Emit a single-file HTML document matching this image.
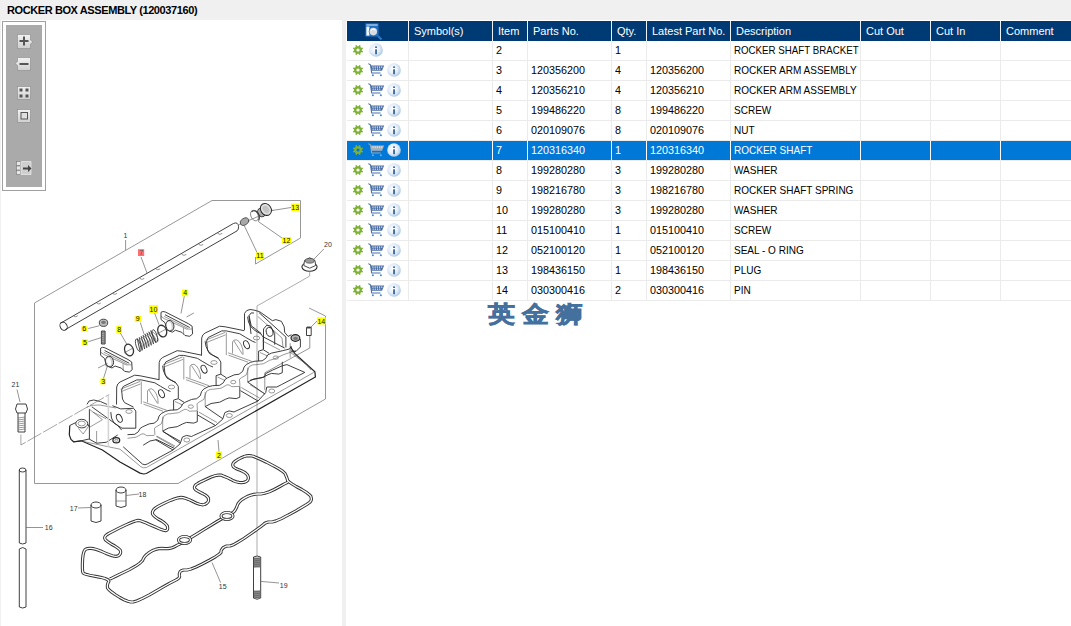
<!DOCTYPE html><html><head><meta charset="utf-8"><style>
*{margin:0;padding:0;box-sizing:border-box}
html,body{width:1071px;height:626px;overflow:hidden;background:#fff;font-family:"Liberation Sans",sans-serif;position:relative}
.a{position:absolute}
.hd{position:absolute;left:0;top:0;width:1071px;height:20px;background:#f0f0f0}
.title{position:absolute;left:7px;top:4px;font-size:11px;line-height:13px;font-weight:bold;color:#000;white-space:nowrap;letter-spacing:-0.4px}
.t{position:absolute;font-size:11px;color:#000;white-space:nowrap;line-height:13px;overflow:hidden}.t span{display:inline-block;transform-origin:0 0}
.h{position:absolute;font-size:11px;color:#fff;white-space:nowrap;line-height:13px}
.ic{position:absolute;overflow:visible}
</style></head><body>
<svg width="0" height="0" style="position:absolute">
<defs>
<radialGradient id="ig" cx="0.42" cy="0.42" r="0.62"><stop offset="0" stop-color="#ffffff"/><stop offset="0.55" stop-color="#e4eef8"/><stop offset="0.85" stop-color="#bcd4ec"/><stop offset="1" stop-color="#a4c2e2"/></radialGradient><radialGradient id="igs" cx="0.42" cy="0.42" r="0.62"><stop offset="0" stop-color="#ffffff"/><stop offset="0.7" stop-color="#eef3f8"/><stop offset="1" stop-color="#c8d8ea"/></radialGradient>
<g id="gear"><path fill="#7db235" fill-rule="evenodd" d="M9.85 6.61 L11.03 7.33 L10.50 8.61 L9.16 8.29 L8.29 9.16 L8.61 10.50 L7.33 11.03 L6.61 9.85 L5.39 9.85 L4.67 11.03 L3.39 10.50 L3.71 9.16 L2.84 8.29 L1.50 8.61 L0.97 7.33 L2.15 6.61 L2.15 5.39 L0.97 4.67 L1.50 3.39 L2.84 3.71 L3.71 2.84 L3.39 1.50 L4.67 0.97 L5.39 2.15 L6.61 2.15 L7.33 0.97 L8.61 1.50 L8.29 2.84 L9.16 3.71 L10.50 3.39 L11.03 4.67 L9.85 5.39Z M7.6 6 A1.6 1.6 0 1 0 4.4 6 A1.6 1.6 0 1 0 7.6 6Z"/></g>
<g id="info"><circle cx="7" cy="7" r="6.8" fill="url(#ig)"/><rect x="6.15" y="3.4" width="1.8" height="1.6" fill="#3a64a0"/><rect x="6.15" y="6.3" width="1.8" height="4.9" fill="#3a64a0"/></g>
<g id="cart"><path d="M0.3 0.6l2.2 1.3 1.2 8.1h8.8" fill="none" stroke="#4d70a6" stroke-width="1.1"/><path d="M2.6 2.4h13.6l-2.2 5.3h-10.6z" fill="#4d70a6"/><g fill="#fff" opacity="0.85"><rect x="4.4" y="3.4" width="1.1" height="1.4"/><rect x="6.6" y="3.4" width="1.1" height="1.4"/><rect x="8.8" y="3.4" width="1.1" height="1.4"/><rect x="11" y="3.4" width="1.1" height="1.4"/><rect x="13.2" y="3.4" width="1.1" height="1.4"/><rect x="4.6" y="5.6" width="1.1" height="1.2"/><rect x="6.8" y="5.6" width="1.1" height="1.2"/><rect x="9" y="5.6" width="1.1" height="1.2"/><rect x="11.2" y="5.6" width="1.1" height="1.2"/></g><circle cx="4.9" cy="12.2" r="1" fill="#3d8ad6"/><circle cx="12.9" cy="12.2" r="1" fill="#3d8ad6"/></g>
<g id="cartsel"><path d="M0.3 0.6l2.2 1.3 1.2 8.1h8.8" fill="none" stroke="#9aa6b4" stroke-width="1.1"/><path d="M2.6 2.4h13.6l-2.2 5.3h-10.6z" fill="#a8b0ba"/><g fill="#e6ecf2"><rect x="4.4" y="3.4" width="1.1" height="1.4"/><rect x="6.6" y="3.4" width="1.1" height="1.4"/><rect x="8.8" y="3.4" width="1.1" height="1.4"/><rect x="11" y="3.4" width="1.1" height="1.4"/><rect x="13.2" y="3.4" width="1.1" height="1.4"/></g><circle cx="4.9" cy="12.2" r="1" fill="#6fb0e8"/><circle cx="12.9" cy="12.2" r="1" fill="#6fb0e8"/></g>
</defs></svg>
<div class="hd"></div>
<div class="title">ROCKER BOX ASSEMBLY (120037160)</div>
<div class="a" style="left:0;top:20px;width:1px;height:606px;background:#f0f0f0"></div>
<div class="a" style="left:342px;top:20px;width:4px;height:606px;background:#f0f0f0"></div>

<div class="a" style="left:2px;top:21px;width:44px;height:170px;border:1px solid #a0a0a0;background:#fff"></div>
<div class="a" style="left:6px;top:25px;width:36px;height:162px;background:#aaaaaa"></div>
<svg class="a" style="left:0;top:0" width="50" height="200" viewBox="0 0 50 200">
<defs><linearGradient id="bg" x1="0" y1="0" x2="0" y2="1"><stop offset="0" stop-color="#f2f2f2"/><stop offset="1" stop-color="#cfcfcf"/></linearGradient></defs>
<g stroke="#8a8a8a" stroke-width="0.6" fill="url(#bg)">
<path d="M17.5 34.5h13v5.5l2.5 2-2.5 2v4.5h-13z"/>
<path d="M17.5 57.5h13v13h-13v-5l-2.5-2 2.5-2z"/>
<rect x="17.5" y="86.5" width="13" height="13"/>
<rect x="17.5" y="109.5" width="13" height="13"/>
</g>
<g fill="#555"><rect x="19.5" y="40" width="9" height="2"/><rect x="23" y="36.5" width="2" height="9"/>
<rect x="19.5" y="63" width="9" height="2"/>
<rect x="19.5" y="88.5" width="3" height="3"/><rect x="25.5" y="88.5" width="3" height="3"/><rect x="19.5" y="94.5" width="3" height="3"/><rect x="25.5" y="94.5" width="3" height="3"/>
</g>
<rect x="21" y="112.5" width="6.5" height="6.5" fill="#e0e0e0" stroke="#555" stroke-width="1"/>
<g stroke="#777" stroke-width="0.6" fill="#e6e6e6"><rect x="16.5" y="161.5" width="4" height="4"/><rect x="16.5" y="166" width="4" height="4"/><rect x="16.5" y="170.5" width="4" height="4"/></g>
<path d="M21 161.5h10v13h-10z" fill="#cfcfcf" stroke="#e8e8e8" stroke-width="0.8"/>
<path d="M23 167.5h5v-2.5l3.5 3.5-3.5 3.5v-2.5h-5z" fill="#444"/>
</svg>

<div class="a" style="left:347px;top:21px;width:724px;height:20px;background:#003a75"></div>
<div class="a" style="left:408px;top:21px;width:1px;height:20px;background:#eef2f6"></div>
<div class="a" style="left:492px;top:21px;width:1px;height:20px;background:#eef2f6"></div>
<div class="a" style="left:527px;top:21px;width:1px;height:20px;background:#eef2f6"></div>
<div class="a" style="left:611px;top:21px;width:1px;height:20px;background:#eef2f6"></div>
<div class="a" style="left:646px;top:21px;width:1px;height:20px;background:#eef2f6"></div>
<div class="a" style="left:730px;top:21px;width:1px;height:20px;background:#eef2f6"></div>
<div class="a" style="left:860px;top:21px;width:1px;height:20px;background:#eef2f6"></div>
<div class="a" style="left:930px;top:21px;width:1px;height:20px;background:#eef2f6"></div>
<div class="a" style="left:1000px;top:21px;width:1px;height:20px;background:#eef2f6"></div>
<svg class="a" style="left:364px;top:22px" width="19" height="19" viewBox="0 0 19 19"><rect x="1.3" y="1.3" width="13.3" height="13.3" fill="#1f6fc2"/><rect x="2.4" y="2.5" width="11.2" height="1" fill="#e8f0f8"/><rect x="2.4" y="4.6" width="3" height="9" fill="#ffffff"/><path d="M14.2 14.2l3.3 3.3" stroke="#2a7ad0" stroke-width="2"/><circle cx="9.3" cy="9.6" r="4.6" fill="#1f6fc2"/><circle cx="9.3" cy="9.6" r="3.8" fill="#d9dde2"/><path d="M6.8 8.2q2.5-2 5 0" stroke="#fff" stroke-width="1" fill="none"/></svg>
<div class="h" style="left:414px;top:25px">Symbol(s)</div>
<div class="h" style="left:498px;top:25px">Item</div>
<div class="h" style="left:533px;top:25px">Parts No.</div>
<div class="h" style="left:617px;top:25px">Qty.</div>
<div class="h" style="left:652px;top:25px">Latest Part No.</div>
<div class="h" style="left:736px;top:25px">Description</div>
<div class="h" style="left:866px;top:25px">Cut Out</div>
<div class="h" style="left:936px;top:25px">Cut In</div>
<div class="h" style="left:1006px;top:25px">Comment</div>
<div class="a" style="left:347px;top:60px;width:724px;height:1px;background:#ebebeb"></div>
<div class="t" style="left:496px;top:44px;color:#000;width:32px"><span style="transform:scaleX(0.98)">2</span></div>
<div class="t" style="left:615px;top:44px;color:#000;width:32px"><span style="transform:scaleX(0.98)">1</span></div>
<div class="t" style="left:734px;top:44px;color:#000;width:127px"><span style="transform:scaleX(0.884)">ROCKER SHAFT BRACKET</span></div>
<svg class="ic" style="left:352.1px;top:44px" width="12" height="12"><use href="#gear"/></svg>
<svg class="ic" style="left:369px;top:42.8px" width="14" height="14"><use href="#info"/></svg>
<div class="a" style="left:347px;top:80px;width:724px;height:1px;background:#ebebeb"></div>
<div class="t" style="left:496px;top:64px;color:#000;width:32px"><span style="transform:scaleX(0.98)">3</span></div>
<div class="t" style="left:531px;top:64px;color:#000;width:81px"><span style="transform:scaleX(0.98)">120356200</span></div>
<div class="t" style="left:615px;top:64px;color:#000;width:32px"><span style="transform:scaleX(0.98)">4</span></div>
<div class="t" style="left:650px;top:64px;color:#000;width:81px"><span style="transform:scaleX(0.98)">120356200</span></div>
<div class="t" style="left:734px;top:64px;color:#000;width:127px"><span style="transform:scaleX(0.91)">ROCKER ARM ASSEMBLY</span></div>
<svg class="ic" style="left:352.1px;top:64px" width="12" height="12"><use href="#gear"/></svg>
<svg class="ic" style="left:367.6px;top:63.2px" width="17" height="14"><use href="#cart"/></svg>
<svg class="ic" style="left:386.9px;top:62.8px" width="14" height="14"><use href="#info"/></svg>
<div class="a" style="left:347px;top:100px;width:724px;height:1px;background:#ebebeb"></div>
<div class="t" style="left:496px;top:84px;color:#000;width:32px"><span style="transform:scaleX(0.98)">4</span></div>
<div class="t" style="left:531px;top:84px;color:#000;width:81px"><span style="transform:scaleX(0.98)">120356210</span></div>
<div class="t" style="left:615px;top:84px;color:#000;width:32px"><span style="transform:scaleX(0.98)">4</span></div>
<div class="t" style="left:650px;top:84px;color:#000;width:81px"><span style="transform:scaleX(0.98)">120356210</span></div>
<div class="t" style="left:734px;top:84px;color:#000;width:127px"><span style="transform:scaleX(0.91)">ROCKER ARM ASSEMBLY</span></div>
<svg class="ic" style="left:352.1px;top:84px" width="12" height="12"><use href="#gear"/></svg>
<svg class="ic" style="left:367.6px;top:83.2px" width="17" height="14"><use href="#cart"/></svg>
<svg class="ic" style="left:386.9px;top:82.8px" width="14" height="14"><use href="#info"/></svg>
<div class="a" style="left:347px;top:120px;width:724px;height:1px;background:#ebebeb"></div>
<div class="t" style="left:496px;top:104px;color:#000;width:32px"><span style="transform:scaleX(0.98)">5</span></div>
<div class="t" style="left:531px;top:104px;color:#000;width:81px"><span style="transform:scaleX(0.98)">199486220</span></div>
<div class="t" style="left:615px;top:104px;color:#000;width:32px"><span style="transform:scaleX(0.98)">8</span></div>
<div class="t" style="left:650px;top:104px;color:#000;width:81px"><span style="transform:scaleX(0.98)">199486220</span></div>
<div class="t" style="left:734px;top:104px;color:#000;width:127px"><span style="transform:scaleX(0.91)">SCREW</span></div>
<svg class="ic" style="left:352.1px;top:104px" width="12" height="12"><use href="#gear"/></svg>
<svg class="ic" style="left:367.6px;top:103.2px" width="17" height="14"><use href="#cart"/></svg>
<svg class="ic" style="left:386.9px;top:102.8px" width="14" height="14"><use href="#info"/></svg>
<div class="a" style="left:347px;top:140px;width:724px;height:1px;background:#ebebeb"></div>
<div class="t" style="left:496px;top:124px;color:#000;width:32px"><span style="transform:scaleX(0.98)">6</span></div>
<div class="t" style="left:531px;top:124px;color:#000;width:81px"><span style="transform:scaleX(0.98)">020109076</span></div>
<div class="t" style="left:615px;top:124px;color:#000;width:32px"><span style="transform:scaleX(0.98)">8</span></div>
<div class="t" style="left:650px;top:124px;color:#000;width:81px"><span style="transform:scaleX(0.98)">020109076</span></div>
<div class="t" style="left:734px;top:124px;color:#000;width:127px"><span style="transform:scaleX(0.91)">NUT</span></div>
<svg class="ic" style="left:352.1px;top:124px" width="12" height="12"><use href="#gear"/></svg>
<svg class="ic" style="left:367.6px;top:123.2px" width="17" height="14"><use href="#cart"/></svg>
<svg class="ic" style="left:386.9px;top:122.8px" width="14" height="14"><use href="#info"/></svg>
<div class="a" style="left:347px;top:141px;width:724px;height:19px;background:#0078d7"></div>
<div class="a" style="left:347px;top:160px;width:724px;height:1px;background:#ebebeb"></div>
<div class="t" style="left:496px;top:144px;color:#fff;width:32px"><span style="transform:scaleX(0.98)">7</span></div>
<div class="t" style="left:531px;top:144px;color:#fff;width:81px"><span style="transform:scaleX(0.98)">120316340</span></div>
<div class="t" style="left:615px;top:144px;color:#fff;width:32px"><span style="transform:scaleX(0.98)">1</span></div>
<div class="t" style="left:650px;top:144px;color:#fff;width:81px"><span style="transform:scaleX(0.98)">120316340</span></div>
<div class="t" style="left:734px;top:144px;color:#fff;width:127px"><span style="transform:scaleX(0.91)">ROCKER SHAFT</span></div>
<svg class="ic" style="left:352.1px;top:144px" width="12" height="12"><use href="#gear"/></svg>
<svg class="ic" style="left:367.6px;top:143.2px" width="17" height="14"><use href="#cartsel"/></svg>
<svg class="ic" style="left:386.9px;top:142.8px" width="14" height="14"><use href="#info"/></svg>
<div class="a" style="left:347px;top:180px;width:724px;height:1px;background:#ebebeb"></div>
<div class="t" style="left:496px;top:164px;color:#000;width:32px"><span style="transform:scaleX(0.98)">8</span></div>
<div class="t" style="left:531px;top:164px;color:#000;width:81px"><span style="transform:scaleX(0.98)">199280280</span></div>
<div class="t" style="left:615px;top:164px;color:#000;width:32px"><span style="transform:scaleX(0.98)">3</span></div>
<div class="t" style="left:650px;top:164px;color:#000;width:81px"><span style="transform:scaleX(0.98)">199280280</span></div>
<div class="t" style="left:734px;top:164px;color:#000;width:127px"><span style="transform:scaleX(0.91)">WASHER</span></div>
<svg class="ic" style="left:352.1px;top:164px" width="12" height="12"><use href="#gear"/></svg>
<svg class="ic" style="left:367.6px;top:163.2px" width="17" height="14"><use href="#cart"/></svg>
<svg class="ic" style="left:386.9px;top:162.8px" width="14" height="14"><use href="#info"/></svg>
<div class="a" style="left:347px;top:200px;width:724px;height:1px;background:#ebebeb"></div>
<div class="t" style="left:496px;top:184px;color:#000;width:32px"><span style="transform:scaleX(0.98)">9</span></div>
<div class="t" style="left:531px;top:184px;color:#000;width:81px"><span style="transform:scaleX(0.98)">198216780</span></div>
<div class="t" style="left:615px;top:184px;color:#000;width:32px"><span style="transform:scaleX(0.98)">3</span></div>
<div class="t" style="left:650px;top:184px;color:#000;width:81px"><span style="transform:scaleX(0.98)">198216780</span></div>
<div class="t" style="left:734px;top:184px;color:#000;width:127px"><span style="transform:scaleX(0.91)">ROCKER SHAFT SPRING</span></div>
<svg class="ic" style="left:352.1px;top:184px" width="12" height="12"><use href="#gear"/></svg>
<svg class="ic" style="left:367.6px;top:183.2px" width="17" height="14"><use href="#cart"/></svg>
<svg class="ic" style="left:386.9px;top:182.8px" width="14" height="14"><use href="#info"/></svg>
<div class="a" style="left:347px;top:220px;width:724px;height:1px;background:#ebebeb"></div>
<div class="t" style="left:496px;top:204px;color:#000;width:32px"><span style="transform:scaleX(0.98)">10</span></div>
<div class="t" style="left:531px;top:204px;color:#000;width:81px"><span style="transform:scaleX(0.98)">199280280</span></div>
<div class="t" style="left:615px;top:204px;color:#000;width:32px"><span style="transform:scaleX(0.98)">3</span></div>
<div class="t" style="left:650px;top:204px;color:#000;width:81px"><span style="transform:scaleX(0.98)">199280280</span></div>
<div class="t" style="left:734px;top:204px;color:#000;width:127px"><span style="transform:scaleX(0.91)">WASHER</span></div>
<svg class="ic" style="left:352.1px;top:204px" width="12" height="12"><use href="#gear"/></svg>
<svg class="ic" style="left:367.6px;top:203.2px" width="17" height="14"><use href="#cart"/></svg>
<svg class="ic" style="left:386.9px;top:202.8px" width="14" height="14"><use href="#info"/></svg>
<div class="a" style="left:347px;top:240px;width:724px;height:1px;background:#ebebeb"></div>
<div class="t" style="left:496px;top:224px;color:#000;width:32px"><span style="transform:scaleX(0.98)">11</span></div>
<div class="t" style="left:531px;top:224px;color:#000;width:81px"><span style="transform:scaleX(0.98)">015100410</span></div>
<div class="t" style="left:615px;top:224px;color:#000;width:32px"><span style="transform:scaleX(0.98)">1</span></div>
<div class="t" style="left:650px;top:224px;color:#000;width:81px"><span style="transform:scaleX(0.98)">015100410</span></div>
<div class="t" style="left:734px;top:224px;color:#000;width:127px"><span style="transform:scaleX(0.91)">SCREW</span></div>
<svg class="ic" style="left:352.1px;top:224px" width="12" height="12"><use href="#gear"/></svg>
<svg class="ic" style="left:367.6px;top:223.2px" width="17" height="14"><use href="#cart"/></svg>
<svg class="ic" style="left:386.9px;top:222.8px" width="14" height="14"><use href="#info"/></svg>
<div class="a" style="left:347px;top:260px;width:724px;height:1px;background:#ebebeb"></div>
<div class="t" style="left:496px;top:244px;color:#000;width:32px"><span style="transform:scaleX(0.98)">12</span></div>
<div class="t" style="left:531px;top:244px;color:#000;width:81px"><span style="transform:scaleX(0.98)">052100120</span></div>
<div class="t" style="left:615px;top:244px;color:#000;width:32px"><span style="transform:scaleX(0.98)">1</span></div>
<div class="t" style="left:650px;top:244px;color:#000;width:81px"><span style="transform:scaleX(0.98)">052100120</span></div>
<div class="t" style="left:734px;top:244px;color:#000;width:127px"><span style="transform:scaleX(0.91)">SEAL - O RING</span></div>
<svg class="ic" style="left:352.1px;top:244px" width="12" height="12"><use href="#gear"/></svg>
<svg class="ic" style="left:367.6px;top:243.2px" width="17" height="14"><use href="#cart"/></svg>
<svg class="ic" style="left:386.9px;top:242.8px" width="14" height="14"><use href="#info"/></svg>
<div class="a" style="left:347px;top:280px;width:724px;height:1px;background:#ebebeb"></div>
<div class="t" style="left:496px;top:264px;color:#000;width:32px"><span style="transform:scaleX(0.98)">13</span></div>
<div class="t" style="left:531px;top:264px;color:#000;width:81px"><span style="transform:scaleX(0.98)">198436150</span></div>
<div class="t" style="left:615px;top:264px;color:#000;width:32px"><span style="transform:scaleX(0.98)">1</span></div>
<div class="t" style="left:650px;top:264px;color:#000;width:81px"><span style="transform:scaleX(0.98)">198436150</span></div>
<div class="t" style="left:734px;top:264px;color:#000;width:127px"><span style="transform:scaleX(0.91)">PLUG</span></div>
<svg class="ic" style="left:352.1px;top:264px" width="12" height="12"><use href="#gear"/></svg>
<svg class="ic" style="left:367.6px;top:263.2px" width="17" height="14"><use href="#cart"/></svg>
<svg class="ic" style="left:386.9px;top:262.8px" width="14" height="14"><use href="#info"/></svg>
<div class="a" style="left:347px;top:300px;width:724px;height:1px;background:#ebebeb"></div>
<div class="t" style="left:496px;top:284px;color:#000;width:32px"><span style="transform:scaleX(0.98)">14</span></div>
<div class="t" style="left:531px;top:284px;color:#000;width:81px"><span style="transform:scaleX(0.98)">030300416</span></div>
<div class="t" style="left:615px;top:284px;color:#000;width:32px"><span style="transform:scaleX(0.98)">2</span></div>
<div class="t" style="left:650px;top:284px;color:#000;width:81px"><span style="transform:scaleX(0.98)">030300416</span></div>
<div class="t" style="left:734px;top:284px;color:#000;width:127px"><span style="transform:scaleX(0.91)">PIN</span></div>
<svg class="ic" style="left:352.1px;top:284px" width="12" height="12"><use href="#gear"/></svg>
<svg class="ic" style="left:367.6px;top:283.2px" width="17" height="14"><use href="#cart"/></svg>
<svg class="ic" style="left:386.9px;top:282.8px" width="14" height="14"><use href="#info"/></svg>
<div class="a" style="left:408px;top:41px;width:1px;height:260px;background:#ebebeb"></div>
<div class="a" style="left:492px;top:41px;width:1px;height:260px;background:#ebebeb"></div>
<div class="a" style="left:527px;top:41px;width:1px;height:260px;background:#ebebeb"></div>
<div class="a" style="left:611px;top:41px;width:1px;height:260px;background:#ebebeb"></div>
<div class="a" style="left:646px;top:41px;width:1px;height:260px;background:#ebebeb"></div>
<div class="a" style="left:730px;top:41px;width:1px;height:260px;background:#ebebeb"></div>
<div class="a" style="left:860px;top:41px;width:1px;height:260px;background:#ebebeb"></div>
<div class="a" style="left:930px;top:41px;width:1px;height:260px;background:#ebebeb"></div>
<div class="a" style="left:1000px;top:41px;width:1px;height:260px;background:#ebebeb"></div>
<div class="a" style="left:408px;top:141px;width:1px;height:19px;background:#fff"></div>
<div class="a" style="left:492px;top:141px;width:1px;height:19px;background:#fff"></div>
<div class="a" style="left:527px;top:141px;width:1px;height:19px;background:#fff"></div>
<div class="a" style="left:611px;top:141px;width:1px;height:19px;background:#fff"></div>
<div class="a" style="left:646px;top:141px;width:1px;height:19px;background:#fff"></div>
<div class="a" style="left:730px;top:141px;width:1px;height:19px;background:#fff"></div>
<div class="a" style="left:860px;top:141px;width:1px;height:19px;background:#fff"></div>
<div class="a" style="left:930px;top:141px;width:1px;height:19px;background:#fff"></div>
<div class="a" style="left:1000px;top:141px;width:1px;height:19px;background:#fff"></div>
<div class="a" style="left:488px;top:301px;font-size:23px;font-weight:bold;color:#44709e;white-space:nowrap;line-height:27px;-webkit-text-stroke:0.7px #44709e;transform:scaleX(1.17);transform-origin:0 0">英</div>
<div class="a" style="left:521.5px;top:301px;font-size:23px;font-weight:bold;color:#44709e;white-space:nowrap;line-height:27px;-webkit-text-stroke:0.7px #44709e;transform:scaleX(1.17);transform-origin:0 0">金</div>
<div class="a" style="left:556px;top:301px;font-size:23px;font-weight:bold;color:#44709e;white-space:nowrap;line-height:27px;-webkit-text-stroke:0.7px #44709e;transform:scaleX(1.17);transform-origin:0 0">狮</div>
<svg class="a" style="left:0;top:0" width="342" height="626" viewBox="0 0 342 626"><style>.mk{fill:none;stroke:#222;stroke-width:1.2}.m{fill:none;stroke:#2a2a2a;stroke-width:0.9}.m2{fill:none;stroke:#555;stroke-width:0.6}.th{fill:none;stroke:#666;stroke-width:0.7}.br{fill:none;stroke:#8c8c8c;stroke-width:0.9}.dash{fill:none;stroke:#888;stroke-width:0.7}.gk{fill:none;stroke:#333;stroke-width:3.2;stroke-linejoin:round}.gw{fill:none;stroke:#fff;stroke-width:1.3;stroke-linejoin:round}.gw2{fill:none;stroke:#fff;stroke-width:1.3}.lb{font-family:"Liberation Sans",sans-serif;font-size:7px;text-anchor:middle;fill:#111}.tx{font-family:"Liberation Sans",sans-serif;font-size:7px;fill:#333}</style><path class="br" d="M255.5 257.0 L255.5 264.0 L300.5 238.0 L300.5 200.5 L212.0 200.5 L34.5 303.0 L34.5 483.5 L178.0 483.5 L325.5 399.0 L325.5 316.0 L309.0 308.0"/>
<text x="123.6" y="238.4" class="tx">1</text>
<path class="th" d="M125.6 240.0 L125.6 250.0"/>
<path class="m" d="M60.4 323.3 L233.4 223.5 Q238 221.5 238.6 226.5 Q238.8 229.5 237 230.9 L65.2 329.7"/>
<ellipse class="m" cx="63.6" cy="326.2" rx="3.4" ry="4.3" transform="rotate(-30 63.6 326.2)"/>
<path class="m2" d="M73.6 315.4 a2 1.3 0 0 0 4 0"/>
<path class="m2" d="M96.7 302.6 a2 1.3 0 0 0 4 0"/>
<path class="m2" d="M112.7 293 a2 1.3 0 0 0 4 0"/>
<path class="m2" d="M140 278 a2 1.3 0 0 0 4 0"/>
<path class="m2" d="M156 268.4 a2 1.3 0 0 0 4 0"/>
<path class="m2" d="M182 254 a2 1.3 0 0 0 4 0"/>
<path class="m2" d="M199 244 a2 1.3 0 0 0 4 0"/>
<path class="m2" d="M218 233 a2 1.3 0 0 0 4 0"/>
<rect x="138" y="249.2" width="6.2" height="6.8" fill="#ff6e6e"/><text x="141.1" y="255.1" class="lb" style="fill:#555">7</text>
<path class="th" d="M141.0 257.0 L147.0 273.0"/>
<path class="th" d="M239.0 224.6 L273.3 210.0"/>
<ellipse cx="261.5" cy="212.5" rx="3.6" ry="4.4" transform="rotate(-30 261.5 212.5)" fill="#b0b0b0" stroke="#333" stroke-width="0.9"/>
<ellipse cx="265.9" cy="209.4" rx="5.2" ry="6.3" transform="rotate(-35 265.9 209.4)" fill="#e2e2e2" stroke="#2a2a2a" stroke-width="1"/>
<ellipse cx="265.9" cy="209.4" rx="3" ry="4" transform="rotate(-35 265.9 209.4)" fill="#c4c4c4" stroke="none"/>
<path d="M251.5 212 A3.8 5.6 -20 0 1 258.5 220.5" fill="none" stroke="#333" stroke-width="1.3"/>
<ellipse cx="254.5" cy="215.6" rx="3.6" ry="5.5" transform="rotate(-25 254.5 215.6)" fill="none" stroke="#666" stroke-width="0.7"/>
<ellipse cx="244.5" cy="221.6" rx="4.6" ry="3.3" transform="rotate(-30 244.5 221.6)" fill="#a8a8a8" stroke="#444" stroke-width="0.8"/>
<rect x="291" y="203.6" width="8.399999999999977" height="7.400000000000006" fill="#ffff00"/>
<text x="295.2" y="210.1" class="lb">13</text>
<path class="th" d="M272.2 210.5 L291.0 207.5"/>
<rect x="282" y="237" width="9" height="7" fill="#ffff00"/>
<text x="286.5" y="243.1" class="lb">12</text>
<path class="th" d="M258.0 221.3 L282.0 238.0"/>
<rect x="256" y="252.4" width="8" height="6.599999999999994" fill="#ffff00"/>
<text x="260.0" y="258.1" class="lb">11</text>
<path class="th" d="M244.0 225.1 L257.0 252.4"/>
<text x="324" y="247.3" class="tx">20</text>
<path class="th" d="M323.8 249.0 L314.0 259.1"/>
<ellipse cx="309.5" cy="266.8" rx="7.6" ry="4.5" fill="#fff" stroke="#2a2a2a" stroke-width="1.1"/>
<path d="M303.8 265.5 L304.5 260.5 L309.7 257.8 L315 260.5 L315.6 265.5 L309.7 268.2Z" fill="#fff" stroke="#333" stroke-width="0.9"/>
<ellipse cx="309.7" cy="260.8" rx="4.6" ry="2.4" fill="#9a9a9a" stroke="#333" stroke-width="0.6"/>
<path class="dash" d="M309.7 271.3 L309.7 276.0 L302.9 280.0"/>
<path class="dash" d="M302.9 280.0 L257.0 306.0 L257.0 556.0"/>
<rect x="182" y="289.5" width="6.199999999999989" height="6.699999999999989" fill="#ffff00"/>
<text x="185.1" y="295.3" class="lb">4</text>
<path class="th" d="M184.3 296.2 L181.0 313.5"/>
<path class="th" d="M186.5 317.0 L193.8 313.0"/>
<path class="m" d="M161.0 312.3 L162.9 311.5 L165.4 312.0 L188.4 323.7 L192.1 326.2 L192.6 333.9 L189.7 336.3 L185.0 335.5 L181.8 332.3 L175.4 330.2 L172.4 332.2 L166.6 329.9 L165.0 322.7 L161.0 319.5Z"/>
<path class="m" d="M165.0 314.7 L189.7 327.5"/>
<path class="m2" d="M164.2 316.4 L187.9 328.4"/>
<path class="m2" d="M161.0 316.3 L164.4 318.7 L183.4 327.5 L186.5 329.1 L192.2 329.0"/>
<path class="m2" d="M183.4 327.7 L183.7 334.7"/>
<ellipse cx="170.0" cy="325.7" rx="3.9" ry="5.4" transform="rotate(-12 170.0 325.7)" fill="#d0d0d0" stroke="#333" stroke-width="0.9"/>
<ellipse cx="169.1" cy="326.0" rx="2.4" ry="4" transform="rotate(-12 169.1 326.0)" fill="#fff" stroke="none"/>
<ellipse cx="162.2" cy="331.1" rx="4.3" ry="6" transform="rotate(-20 162.2 331.1)" fill="none" stroke="#333" stroke-width="1.3"/>
<path class="th" d="M157.0 334.0 L166.0 329.0"/>
<rect x="149" y="305.2" width="9" height="7.800000000000011" fill="#ffff00"/>
<text x="153.5" y="312.1" class="lb">10</text>
<path class="th" d="M154.6 313.0 L159.0 324.7"/>
<path d="M140.1 351.5 Q138.6 345.0 137.3 338.5" fill="none" stroke="#333" stroke-width="0.9"/>
<path d="M137.3 338.5 Q143.8 344.4 142.3 350.3" fill="none" stroke="#555" stroke-width="0.6"/>
<path d="M142.3 350.3 Q140.8 343.8 139.2 337.4" fill="none" stroke="#333" stroke-width="0.9"/>
<path d="M139.2 337.4 Q146.1 343.2 144.6 349.0" fill="none" stroke="#555" stroke-width="0.6"/>
<path d="M144.6 349.0 Q143.1 342.7 141.1 336.3" fill="none" stroke="#333" stroke-width="0.9"/>
<path d="M141.1 336.3 Q148.3 342.0 146.8 347.8" fill="none" stroke="#555" stroke-width="0.6"/>
<path d="M146.8 347.8 Q145.3 341.5 143.0 335.2" fill="none" stroke="#333" stroke-width="0.9"/>
<path d="M143.0 335.2 Q150.5 340.9 149.0 346.6" fill="none" stroke="#555" stroke-width="0.6"/>
<path d="M149.0 346.6 Q147.5 340.3 144.9 334.0" fill="none" stroke="#333" stroke-width="0.9"/>
<path d="M144.9 334.0 Q152.8 339.7 151.3 345.3" fill="none" stroke="#555" stroke-width="0.6"/>
<path d="M151.3 345.3 Q149.8 339.1 146.8 332.9" fill="none" stroke="#333" stroke-width="0.9"/>
<path d="M146.8 332.9 Q155.0 338.5 153.5 344.1" fill="none" stroke="#555" stroke-width="0.6"/>
<path d="M153.5 344.1 Q152.0 337.9 148.7 331.8" fill="none" stroke="#333" stroke-width="0.9"/>
<path d="M148.7 331.8 Q157.3 337.3 155.8 342.8" fill="none" stroke="#555" stroke-width="0.6"/>
<path d="M155.8 342.8 Q154.3 336.8 150.6 330.7" fill="none" stroke="#333" stroke-width="0.9"/>
<path d="M150.6 330.7 Q159.5 336.1 158.0 341.6" fill="none" stroke="#555" stroke-width="0.6"/>
<ellipse cx="138.2" cy="345.3" rx="2.2" ry="6.5" transform="rotate(-17 138.2 345.3)" fill="none" stroke="#333" stroke-width="0.8"/>
<ellipse cx="154.8" cy="335.9" rx="2.2" ry="6.5" transform="rotate(-17 154.8 335.9)" fill="none" stroke="#333" stroke-width="0.8"/>
<rect x="134.7" y="316" width="6.300000000000011" height="6" fill="#ffff00"/>
<text x="137.8" y="321.1" class="lb">9</text>
<path class="th" d="M140.3 322.5 L144.2 334.5"/>
<ellipse cx="129" cy="350" rx="4.3" ry="6" transform="rotate(-20 129 350)" fill="none" stroke="#333" stroke-width="1.3"/>
<path class="th" d="M124.0 353.0 L133.0 348.0"/>
<rect x="116.3" y="325.7" width="5.6000000000000085" height="7.300000000000011" fill="#ffff00"/>
<text x="119.1" y="332.1" class="lb">8</text>
<path class="th" d="M120.3 333.0 L126.7 344.0"/>
<ellipse cx="103.5" cy="322.8" rx="4.2" ry="3.6" fill="#bdbdbd" stroke="#333" stroke-width="0.9"/>
<ellipse cx="103.5" cy="322.3" rx="2.4" ry="1.6" fill="#777"/>
<path d="M101.4 331 h3.7 v13 h-3.7z" fill="#aaa" stroke="#333" stroke-width="0.9"/>
<path class="m2" d="M101.4 332.5 L105.1 332.0"/>
<path class="m2" d="M101.4 334.5 L105.1 334.0"/>
<path class="m2" d="M101.4 336.5 L105.1 336.0"/>
<path class="m2" d="M101.4 338.5 L105.1 338.0"/>
<path class="m2" d="M101.4 340.5 L105.1 340.0"/>
<path class="m2" d="M101.4 342.5 L105.1 342.0"/>
<rect x="81.2" y="326.2" width="5.799999999999997" height="5.400000000000034" fill="#ffff00"/>
<text x="84.1" y="330.7" class="lb">6</text>
<path class="th" d="M88.3 328.5 L99.5 325.7"/>
<rect x="82" y="339.3" width="6" height="6.099999999999966" fill="#ffff00"/>
<text x="85.0" y="344.5" class="lb">5</text>
<path class="th" d="M88.3 341.7 L101.0 337.7"/>
<path class="m" d="M100.6 348.1 L102.5 347.3 L105.0 347.8 L128.0 359.5 L131.7 362.0 L132.2 369.7 L129.3 372.1 L124.6 371.3 L121.4 368.1 L115.0 366.0 L112.0 368.0 L106.2 365.7 L104.6 358.5 L100.6 355.3Z"/>
<path class="m" d="M104.6 350.5 L129.3 363.3"/>
<path class="m2" d="M103.8 352.2 L127.5 364.2"/>
<path class="m2" d="M100.6 352.1 L104.0 354.5 L123.0 363.3 L126.1 364.9 L131.8 364.8"/>
<path class="m2" d="M123.0 363.5 L123.3 370.5"/>
<ellipse cx="109.6" cy="361.5" rx="3.9" ry="5.4" transform="rotate(-12 109.6 361.5)" fill="#d0d0d0" stroke="#333" stroke-width="0.9"/>
<ellipse cx="108.7" cy="361.8" rx="2.4" ry="4" transform="rotate(-12 108.7 361.8)" fill="#fff" stroke="none"/>
<rect x="100.3" y="378.5" width="5.700000000000003" height="5.899999999999977" fill="#ffff00"/>
<text x="103.2" y="383.5" class="lb">3</text>
<path class="th" d="M103.5 378.5 L107.5 365.7"/>
<path class="th" d="M98.0 368.0 L107.5 363.3"/>
<rect x="316.9" y="317.3" width="8.800000000000011" height="7.199999999999989" fill="#ffff00"/>
<text x="321.3" y="323.6" class="lb">14</text>
<path class="th" d="M311.0 327.0 L317.0 321.0"/>
<path class="m" d="M306.5 327.5 h4.7 v8 h-4.7z"/>
<ellipse class="m2" cx="308.8" cy="327.5" rx="2.35" ry="1"/>
<path class="th" d="M309.8 336.0 L309.8 348.0 L264.8 372.8 L264.8 390.0"/>
<text x="11.5" y="386.8" class="tx">21</text>
<path class="th" d="M17.0 389.5 L20.0 402.0"/>
<path class="m" d="M15.5 409 l1.5 -5 h9 l1.5 5 l-1.5 4 h-9z"/>
<path class="m" d="M18 413 v19 h7 v-19"/>
<path class="m2" d="M18.0 418.0 L25.0 417.0"/>
<path class="m2" d="M18.0 420.0 L25.0 419.0"/>
<path class="m2" d="M18.0 422.0 L25.0 421.0"/>
<path class="m2" d="M18.0 424.0 L25.0 423.0"/>
<path class="m2" d="M18.0 426.0 L25.0 425.0"/>
<path class="m2" d="M18.0 428.0 L25.0 427.0"/>
<path class="m2" d="M18.0 430.0 L25.0 429.0"/>
<path class="m" d="M19.3 470 v73 q3.35 2 6.7 0 v-73"/>
<ellipse class="m" cx="22.6" cy="470" rx="3.35" ry="2"/>
<path class="m" d="M19.3 549 q3.35 -3 6.7 0 M19.3 549 v58 q3.35 2 6.7 0 v-58"/>
<text x="44.8" y="530.4" class="tx">16</text>
<path class="th" d="M26.0 527.5 L43.0 527.5"/>
<path class="m" d="M91 505 v16 q5 3 10 0 v-16"/>
<ellipse class="m" cx="96" cy="505" rx="5" ry="3"/>
<text x="69.8" y="511.4" class="tx">17</text>
<path class="th" d="M78.0 508.0 L91.0 507.5"/>
<path class="m" d="M116 490 v16 q5 3 10 0 v-16"/>
<ellipse class="m" cx="121" cy="490" rx="5" ry="3"/>
<path class="m2" d="M116.0 501.0 L126.0 501.0"/>
<text x="138.6" y="497.2" class="tx">18</text>
<path class="th" d="M126.0 495.5 L139.0 494.0"/>
<path class="m" d="M253.5 557 v41 q3.6 2.5 7.2 0 v-41 q-3.6 -2 -7.2 0z"/>
<rect x="254" y="557.5" width="6.2" height="10" fill="#8a8a8a"/><rect x="254" y="590.5" width="6.2" height="8" fill="#8a8a8a"/>
<path class="m2" d="M253.5 559.0 L260.7 558.0"/>
<path class="m2" d="M253.5 561.0 L260.7 560.0"/>
<path class="m2" d="M253.5 563.0 L260.7 562.0"/>
<path class="m2" d="M253.5 565.0 L260.7 564.0"/>
<path class="m2" d="M253.5 567.0 L260.7 566.0"/>
<path class="m2" d="M253.5 592.0 L260.7 591.0"/>
<path class="m2" d="M253.5 594.0 L260.7 593.0"/>
<path class="m2" d="M253.5 596.0 L260.7 595.0"/>
<path class="m2" d="M253.5 598.0 L260.7 597.0"/>
<text x="279.8" y="587.5" class="tx">19</text>
<path class="th" d="M260.7 581.4 L279.0 583.0"/>
<text x="218.8" y="589" class="tx">15</text>
<path class="th" d="M212.0 562.5 L220.6 582.6"/>
<rect x="216" y="451.6" width="6" height="6.7999999999999545" fill="#ffff00"/>
<text x="219.0" y="457.5" class="lb">2</text>
<path class="th" d="M219.0 451.6 L218.0 440.0"/>
<path class="gk" d="M82.4 564.1 L82.6 558.9 L83.1 554.8 L83.9 551.8 L84.9 549.9 L86.1 549.1 L87.6 548.6 L89.2 548.4 L91.0 548.4 L93.0 548.6 L95.5 549.2 L98.5 550.2 L102.0 551.6 L106.0 553.4 L109.4 554.7 L112.1 555.7 L114.2 556.2 L115.8 556.3 L117.1 556.2 L118.2 555.8 L119.1 555.2 L119.9 554.3 L120.4 553.4 L120.6 552.5 L120.6 551.5 L120.4 550.5 L119.3 549.2 L117.4 547.8 L114.8 546.0 L111.2 544.0 L108.5 542.2 L106.5 540.8 L105.2 539.5 L104.8 538.5 L104.7 537.5 L105.1 536.5 L105.9 535.5 L107.1 534.5 L109.8 532.9 L113.8 530.8 L119.1 528.1 L125.9 524.9 L131.3 522.5 L135.4 521.0 L138.2 520.4 L139.8 520.6 L142.2 521.4 L145.8 522.8 L150.2 524.8 L155.8 527.2 L160.1 529.1 L163.4 530.2 L165.5 530.6 L166.5 530.4 L167.2 529.8 L167.6 528.9 L167.6 527.8 L167.4 526.2 L166.3 524.6 L164.4 522.9 L161.8 521.0 L158.2 519.0 L155.6 517.2 L153.7 515.6 L152.6 514.1 L152.4 512.9 L152.6 511.6 L153.2 510.4 L154.2 509.1 L155.8 507.9 L158.1 506.4 L161.4 504.6 L165.5 502.6 L170.5 500.4 L174.8 498.8 L178.2 497.8 L181.0 497.4 L183.0 497.6 L185.5 498.3 L188.5 499.4 L192.0 501.0 L196.0 503.0 L199.4 504.2 L202.3 504.8 L204.6 504.5 L206.4 503.5 L207.6 502.4 L208.4 501.1 L208.6 499.8 L208.4 498.2 L207.4 496.8 L205.6 495.2 L203.1 493.8 L199.9 492.2 L197.4 490.9 L195.6 489.6 L194.6 488.5 L194.4 487.5 L194.6 486.5 L195.2 485.5 L196.2 484.5 L197.8 483.5 L200.0 482.2 L203.0 480.8 L206.8 479.0 L211.2 477.0 L215.1 475.7 L218.4 475.1 L221.0 475.1 L223.0 475.9 L225.2 476.8 L227.8 477.9 L230.5 479.2 L233.5 480.8 L236.3 481.8 L238.9 482.4 L241.4 482.6 L243.6 482.4 L245.4 481.9 L246.8 481.1 L247.8 480.1 L248.2 478.9 L248.4 477.6 L248.1 476.4 L247.5 475.1 L246.5 473.9 L245.1 472.7 L243.2 471.6 L240.9 470.5 L238.1 469.5 L235.9 468.5 L234.3 467.5 L233.2 466.5 L232.8 465.5 L232.8 464.4 L233.2 463.3 L234.2 462.1 L235.8 460.9 L237.5 459.7 L239.5 458.6 L241.8 457.5 L244.2 456.5 L246.6 455.9 L248.9 455.6 L251.0 455.8 L253.0 456.2 L256.2 457.5 L260.8 459.5 L266.5 462.2 L273.5 465.8 L278.9 468.8 L282.8 471.4 L285.1 473.6 L285.9 475.4 L286.5 476.9 L287.0 478.3 L287.4 479.5 L287.6 480.5 L289.2 482.0 L292.1 484.0 L296.2 486.5 L301.8 489.5 L306.0 492.1 L309.0 494.4 L310.8 496.2 L311.2 497.8 L311.4 499.1 L311.1 500.4 L310.5 501.5 L309.5 502.5 L306.8 504.4 L302.2 507.1 L296.0 510.8 L288.0 515.2 L281.4 518.6 L276.1 520.9 L272.2 522.0 L269.8 522.0 L267.6 522.2 L265.9 522.8 L264.5 523.5 L263.5 524.5 L260.9 526.5 L256.8 529.5 L251.1 533.5 L243.9 538.5 L237.9 542.2 L233.3 544.8 L230.0 546.0 L228.0 546.0 L226.2 546.2 L224.8 546.8 L223.5 547.5 L222.5 548.5 L221.8 549.5 L221.2 550.5 L221.0 551.5 L221.0 552.5 L219.1 554.2 L215.4 556.8 L209.8 560.0 L202.2 564.0 L196.0 567.0 L191.0 569.0 L187.2 570.0 L184.8 570.0 L182.8 570.2 L181.2 570.8 L180.2 571.5 L179.8 572.5 L179.4 573.5 L179.3 574.5 L179.4 575.5 L179.6 576.5 L179.2 577.6 L178.1 578.7 L176.2 579.9 L173.8 581.1 L169.8 583.2 L164.4 586.2 L157.6 590.1 L149.4 594.9 L142.6 598.4 L137.2 600.8 L133.2 602.0 L130.8 602.0 L127.7 601.2 L124.1 599.8 L119.9 597.5 L115.1 594.5 L111.5 591.9 L109.0 589.8 L107.6 588.1 L107.4 586.9 L107.4 585.6 L107.6 584.2 L108.1 582.8 L108.9 581.2 L107.9 579.8 L105.1 578.5 L100.6 577.3 L94.4 576.2 L89.5 575.2 L86.0 574.3 L83.9 573.6 L83.1 572.9 L82.6 571.2 L82.4 568.2Z"/>
<path class="gk" d="M288.0 482.0 L286.6 482.8 L283.9 484.2 L279.8 486.5 L274.2 489.5 L269.2 491.8 L264.8 493.2 L260.8 494.0 L257.2 494.0 L253.8 494.4 L250.4 495.3 L247.1 496.6 L243.9 498.4 L241.2 500.2 L239.2 502.1 L237.9 504.0 L237.1 506.0 L236.4 507.8 L235.6 509.2 L234.9 510.5 L234.1 511.5 L232.8 512.6 L230.9 513.9 L228.5 515.2 L225.5 516.8 L221.4 519.0 L216.3 522.0 L210.1 525.8 L202.9 530.2 L196.6 534.1 L191.2 537.4 L186.8 540.0 L183.2 542.0 L180.1 543.8 L177.4 545.2 L175.0 546.5 L173.0 547.5 L170.7 548.2 L168.1 548.6 L165.1 548.6 L161.9 548.4 L158.7 548.6 L155.6 549.4 L152.5 550.6 L149.5 552.4 L147.0 554.2 L145.0 556.2 L143.5 558.4 L142.5 560.6 L139.8 563.2 L135.4 566.2 L129.4 569.6 L121.6 573.4 L115.8 576.2 L111.9 578.1 L110.0 579.0"/>
<path class="gw" d="M82.4 564.1 L82.6 558.9 L83.1 554.8 L83.9 551.8 L84.9 549.9 L86.1 549.1 L87.6 548.6 L89.2 548.4 L91.0 548.4 L93.0 548.6 L95.5 549.2 L98.5 550.2 L102.0 551.6 L106.0 553.4 L109.4 554.7 L112.1 555.7 L114.2 556.2 L115.8 556.3 L117.1 556.2 L118.2 555.8 L119.1 555.2 L119.9 554.3 L120.4 553.4 L120.6 552.5 L120.6 551.5 L120.4 550.5 L119.3 549.2 L117.4 547.8 L114.8 546.0 L111.2 544.0 L108.5 542.2 L106.5 540.8 L105.2 539.5 L104.8 538.5 L104.7 537.5 L105.1 536.5 L105.9 535.5 L107.1 534.5 L109.8 532.9 L113.8 530.8 L119.1 528.1 L125.9 524.9 L131.3 522.5 L135.4 521.0 L138.2 520.4 L139.8 520.6 L142.2 521.4 L145.8 522.8 L150.2 524.8 L155.8 527.2 L160.1 529.1 L163.4 530.2 L165.5 530.6 L166.5 530.4 L167.2 529.8 L167.6 528.9 L167.6 527.8 L167.4 526.2 L166.3 524.6 L164.4 522.9 L161.8 521.0 L158.2 519.0 L155.6 517.2 L153.7 515.6 L152.6 514.1 L152.4 512.9 L152.6 511.6 L153.2 510.4 L154.2 509.1 L155.8 507.9 L158.1 506.4 L161.4 504.6 L165.5 502.6 L170.5 500.4 L174.8 498.8 L178.2 497.8 L181.0 497.4 L183.0 497.6 L185.5 498.3 L188.5 499.4 L192.0 501.0 L196.0 503.0 L199.4 504.2 L202.3 504.8 L204.6 504.5 L206.4 503.5 L207.6 502.4 L208.4 501.1 L208.6 499.8 L208.4 498.2 L207.4 496.8 L205.6 495.2 L203.1 493.8 L199.9 492.2 L197.4 490.9 L195.6 489.6 L194.6 488.5 L194.4 487.5 L194.6 486.5 L195.2 485.5 L196.2 484.5 L197.8 483.5 L200.0 482.2 L203.0 480.8 L206.8 479.0 L211.2 477.0 L215.1 475.7 L218.4 475.1 L221.0 475.1 L223.0 475.9 L225.2 476.8 L227.8 477.9 L230.5 479.2 L233.5 480.8 L236.3 481.8 L238.9 482.4 L241.4 482.6 L243.6 482.4 L245.4 481.9 L246.8 481.1 L247.8 480.1 L248.2 478.9 L248.4 477.6 L248.1 476.4 L247.5 475.1 L246.5 473.9 L245.1 472.7 L243.2 471.6 L240.9 470.5 L238.1 469.5 L235.9 468.5 L234.3 467.5 L233.2 466.5 L232.8 465.5 L232.8 464.4 L233.2 463.3 L234.2 462.1 L235.8 460.9 L237.5 459.7 L239.5 458.6 L241.8 457.5 L244.2 456.5 L246.6 455.9 L248.9 455.6 L251.0 455.8 L253.0 456.2 L256.2 457.5 L260.8 459.5 L266.5 462.2 L273.5 465.8 L278.9 468.8 L282.8 471.4 L285.1 473.6 L285.9 475.4 L286.5 476.9 L287.0 478.3 L287.4 479.5 L287.6 480.5 L289.2 482.0 L292.1 484.0 L296.2 486.5 L301.8 489.5 L306.0 492.1 L309.0 494.4 L310.8 496.2 L311.2 497.8 L311.4 499.1 L311.1 500.4 L310.5 501.5 L309.5 502.5 L306.8 504.4 L302.2 507.1 L296.0 510.8 L288.0 515.2 L281.4 518.6 L276.1 520.9 L272.2 522.0 L269.8 522.0 L267.6 522.2 L265.9 522.8 L264.5 523.5 L263.5 524.5 L260.9 526.5 L256.8 529.5 L251.1 533.5 L243.9 538.5 L237.9 542.2 L233.3 544.8 L230.0 546.0 L228.0 546.0 L226.2 546.2 L224.8 546.8 L223.5 547.5 L222.5 548.5 L221.8 549.5 L221.2 550.5 L221.0 551.5 L221.0 552.5 L219.1 554.2 L215.4 556.8 L209.8 560.0 L202.2 564.0 L196.0 567.0 L191.0 569.0 L187.2 570.0 L184.8 570.0 L182.8 570.2 L181.2 570.8 L180.2 571.5 L179.8 572.5 L179.4 573.5 L179.3 574.5 L179.4 575.5 L179.6 576.5 L179.2 577.6 L178.1 578.7 L176.2 579.9 L173.8 581.1 L169.8 583.2 L164.4 586.2 L157.6 590.1 L149.4 594.9 L142.6 598.4 L137.2 600.8 L133.2 602.0 L130.8 602.0 L127.7 601.2 L124.1 599.8 L119.9 597.5 L115.1 594.5 L111.5 591.9 L109.0 589.8 L107.6 588.1 L107.4 586.9 L107.4 585.6 L107.6 584.2 L108.1 582.8 L108.9 581.2 L107.9 579.8 L105.1 578.5 L100.6 577.3 L94.4 576.2 L89.5 575.2 L86.0 574.3 L83.9 573.6 L83.1 572.9 L82.6 571.2 L82.4 568.2Z"/>
<path class="gw" d="M288.0 482.0 L286.6 482.8 L283.9 484.2 L279.8 486.5 L274.2 489.5 L269.2 491.8 L264.8 493.2 L260.8 494.0 L257.2 494.0 L253.8 494.4 L250.4 495.3 L247.1 496.6 L243.9 498.4 L241.2 500.2 L239.2 502.1 L237.9 504.0 L237.1 506.0 L236.4 507.8 L235.6 509.2 L234.9 510.5 L234.1 511.5 L232.8 512.6 L230.9 513.9 L228.5 515.2 L225.5 516.8 L221.4 519.0 L216.3 522.0 L210.1 525.8 L202.9 530.2 L196.6 534.1 L191.2 537.4 L186.8 540.0 L183.2 542.0 L180.1 543.8 L177.4 545.2 L175.0 546.5 L173.0 547.5 L170.7 548.2 L168.1 548.6 L165.1 548.6 L161.9 548.4 L158.7 548.6 L155.6 549.4 L152.5 550.6 L149.5 552.4 L147.0 554.2 L145.0 556.2 L143.5 558.4 L142.5 560.6 L139.8 563.2 L135.4 566.2 L129.4 569.6 L121.6 573.4 L115.8 576.2 L111.9 578.1 L110.0 579.0"/>
<ellipse cx="227" cy="516" rx="6" ry="3.5" fill="#fff" stroke="#333" stroke-width="3.1"/>
<ellipse class="gw2" cx="227" cy="516" rx="6" ry="3.5"/>
<ellipse cx="184.5" cy="540" rx="6" ry="3.5" fill="#fff" stroke="#333" stroke-width="3.1"/>
<ellipse class="gw2" cx="184.5" cy="540" rx="6" ry="3.5"/><ellipse class="m2" cx="129.0" cy="411.5" rx="3.2" ry="1.9"/>
<path class="m" d="M127.5 434.7 L134.7 434.3 L138.3 431.8 L140.1 428.5 L142.6 426.8 L149.1 423.9 L154.1 423.2 L157.7 420.3 L159.1 416.0 L161.3 413.5 L165.6 411.3 L170.0 410.2"/>
<path class="m2" d="M127.5 438.3 L136.1 437.2 L141.9 433.9 L144.0 433.9 L146.9 435.7 L154.1 435.4 L154.9 434.5 L154.5 428.2 L156.3 426.8 L161.3 423.9 L163.0 418.5 L164.2 415.6 L167.8 413.8 L170.0 413.8"/>
<path class="m2" d="M162.7 416.7 L162.7 431.1"/>
<path class="m" d="M162.7 431.1 L180.1 443.1"/>
<path class="m2" d="M156.3 436.5 L174.5 447.0"/>
<path class="m" d="M155.5 439.7 L173.0 450.0"/>
<path class="m" d="M116.5 404.5 L116.7 387.0 L117.8 384.0 L120.1 382.0 L134.6 375.2 L140.2 375.8 L159.2 379.7"/>
<path class="m" d="M121.6 390.2 L123.2 386.5 L136.8 379.9 L141.3 379.9 L154.8 382.8 L160.4 386.2 L167.1 390.1 L170.5 391.5"/>
<path class="m" d="M121.6 390.2 L122.5 399.0 L124.5 402.6 L133.5 407.1"/>
<path class="m2" d="M120.6 389.2 L140.2 381.4"/>
<path class="m2" d="M121.2 391.6 L140.5 383.9"/>
<path class="m2" d="M141.3 381.4 L141.3 404.0"/>
<path class="m2" d="M147.5 402.4 L147.5 391.0 L148.8 389.2 L151.5 388.8 L154.0 390.5 L156.3 394.0 L157.8 398.5 L158.1 403.5"/>
<path class="m2" d="M149.0 390.0 L157.6 403.5"/>
<path class="m2" d="M143.2 401.8 L166.7 410.3"/>
<path class="m2" d="M143.5 404.2 L163.0 411.2"/>
<path class="m" d="M162.6 365.7 L163.5 371.0 L165.9 375.8 L170.0 379.5 L176.0 383.0 L178.3 386.5 L178.3 398.5"/>
<ellipse class="m" cx="161.5" cy="393.7" rx="2.6" ry="4.2" transform="rotate(-25 161.5 393.7)"/>
<ellipse class="m2" cx="171.5" cy="387.0" rx="3.2" ry="1.9"/>
<path class="m" d="M173.6 410.2 L173.6 400.1 L178.3 398.7 L184.0 402.3"/>
<path class="m2" d="M175.0 401.5 L182.5 405.0"/>
<path class="m" d="M170.0 410.2 L177.2 409.8 L180.8 407.3 L182.6 404.0 L185.1 402.3 L191.6 399.4 L196.6 398.7 L200.2 395.8 L201.6 391.5 L203.8 389.0 L208.1 386.8 L212.5 385.7"/>
<path class="m2" d="M170.0 413.8 L178.6 412.7 L184.4 409.4 L186.5 409.4 L189.4 411.2 L196.6 410.9 L197.4 410.0 L197.0 403.7 L198.8 402.3 L203.8 399.4 L205.5 394.0 L206.7 391.1 L210.3 389.3 L212.5 389.3"/>
<path class="m" d="M162.7 431.1 L168.5 428.0 L177.2 426.7 L182.9 423.8 L186.5 422.4 L193.7 423.1 L197.3 421.7 L197.3 410.8"/>
<path class="m2" d="M205.2 392.2 L205.2 406.6"/>
<path class="m" d="M205.2 406.6 L222.6 418.6"/>
<path class="m2" d="M198.8 412.0 L217.0 422.5"/>
<path class="m" d="M198.0 415.2 L215.5 425.5"/>
<ellipse class="m2" cx="186.8" cy="440.0" rx="3" ry="2"/>
<ellipse class="m2" cx="190.8" cy="406.6" rx="2.6" ry="1.7"/>
<path class="m" d="M159.0 380.0 L159.2 362.5 L160.3 359.5 L162.6 357.5 L177.1 350.7 L182.7 351.3 L201.7 355.2"/>
<path class="m" d="M164.1 365.7 L165.7 362.0 L179.3 355.4 L183.8 355.4 L197.3 358.3 L202.9 361.7 L209.6 365.6 L213.0 367.0"/>
<path class="m" d="M164.1 365.7 L165.0 374.5 L167.0 378.1 L176.0 382.6"/>
<path class="m2" d="M163.1 364.7 L182.7 356.9"/>
<path class="m2" d="M163.7 367.1 L183.0 359.4"/>
<path class="m2" d="M183.8 356.9 L183.8 379.5"/>
<path class="m2" d="M190.0 377.9 L190.0 366.5 L191.3 364.7 L194.0 364.3 L196.5 366.0 L198.8 369.5 L200.3 374.0 L200.6 379.0"/>
<path class="m2" d="M191.5 365.5 L200.1 379.0"/>
<path class="m2" d="M185.7 377.3 L209.2 385.8"/>
<path class="m2" d="M186.0 379.7 L205.5 386.7"/>
<path class="m" d="M205.1 341.2 L206.0 346.5 L208.4 351.3 L212.5 355.0 L218.5 358.5 L220.8 362.0 L220.8 374.0"/>
<ellipse class="m" cx="204.0" cy="369.2" rx="2.6" ry="4.2" transform="rotate(-25 204.0 369.2)"/>
<ellipse class="m2" cx="214.0" cy="362.5" rx="3.2" ry="1.9"/>
<path class="m" d="M216.1 385.7 L216.1 375.6 L220.8 374.2 L226.5 377.8"/>
<path class="m2" d="M217.5 377.0 L225.0 380.5"/>
<path class="m" d="M212.5 385.7 L219.7 385.3 L223.3 382.8 L225.1 379.5 L227.6 377.8 L234.1 374.9 L239.1 374.2 L242.7 371.3 L244.1 367.0 L246.3 364.5 L250.6 362.3 L255.0 361.2"/>
<path class="m2" d="M212.5 389.3 L221.1 388.2 L226.9 384.9 L229.0 384.9 L231.9 386.7 L239.1 386.4 L239.9 385.5 L239.5 379.2 L241.3 377.8 L246.3 374.9 L248.0 369.5 L249.2 366.6 L252.8 364.8 L255.0 364.8"/>
<path class="m" d="M205.2 406.6 L211.0 403.5 L219.7 402.2 L225.4 399.3 L229.0 397.9 L236.2 398.6 L239.8 397.2 L239.8 386.3"/>
<path class="m2" d="M247.7 367.7 L247.7 382.1"/>
<path class="m" d="M247.7 382.1 L265.1 394.1"/>
<path class="m2" d="M241.3 387.5 L259.5 398.0"/>
<path class="m" d="M240.5 390.7 L258.0 401.0"/>
<ellipse class="m2" cx="229.3" cy="415.5" rx="3" ry="2"/>
<ellipse class="m2" cx="233.3" cy="382.1" rx="2.6" ry="1.7"/>
<path class="m" d="M201.5 355.5 L201.7 338.0 L202.8 335.0 L205.1 333.0 L219.6 326.2 L225.2 326.8 L244.2 330.7"/>
<path class="m" d="M206.6 341.2 L208.2 337.5 L221.8 330.9 L226.3 330.9 L239.8 333.8 L245.4 337.2 L252.1 341.1 L255.5 342.5"/>
<path class="m" d="M206.6 341.2 L207.5 350.0 L209.5 353.6 L218.5 358.1"/>
<path class="m2" d="M205.6 340.2 L225.2 332.4"/>
<path class="m2" d="M206.2 342.6 L225.5 334.9"/>
<path class="m2" d="M226.3 332.4 L226.3 355.0"/>
<path class="m2" d="M232.5 353.4 L232.5 342.0 L233.8 340.2 L236.5 339.8 L239.0 341.5 L241.3 345.0 L242.8 349.5 L243.1 354.5"/>
<path class="m2" d="M234.0 341.0 L242.6 354.5"/>
<path class="m2" d="M228.2 352.8 L251.7 361.3"/>
<path class="m2" d="M228.5 355.2 L248.0 362.2"/>
<path class="m" d="M247.6 316.7 L248.5 322.0 L250.9 326.8 L255.0 330.5 L261.0 334.0 L263.3 337.5 L263.3 349.5"/>
<ellipse class="m" cx="246.5" cy="344.7" rx="2.6" ry="4.2" transform="rotate(-25 246.5 344.7)"/>
<ellipse class="m2" cx="256.5" cy="338.0" rx="3.2" ry="1.9"/>
<path class="m" d="M258.6 361.2 L258.6 351.1 L263.3 349.7 L269.0 353.3"/>
<path class="m2" d="M260.0 352.5 L267.5 356.0"/>
<path class="m" d="M255.0 361.2 L262.2 360.8 L265.8 358.3 L267.6 355.0 L271.5 353.1 L282.7 350.7 L289.1 349.1 L292.0 346.5"/>
<path class="m2" d="M255.0 364.8 L263.6 363.7 L269.4 360.4 L274.0 359.0 L284.0 354.5 L290.0 352.5 L296.0 350.5"/>
<path class="m" d="M247.7 382.1 L253.5 379.0 L262.2 377.7 L267.9 374.8 L271.5 373.4 L278.7 374.1 L282.3 372.7 L282.3 361.8"/>
<path class="m2" d="M290.2 343.2 L290.2 357.6"/>
<ellipse class="m2" cx="271.8" cy="391.0" rx="3" ry="2"/>
<ellipse class="m2" cx="275.8" cy="357.6" rx="2.6" ry="1.7"/>
<ellipse class="m" cx="119.3" cy="418.3" rx="2.6" ry="4.2" transform="rotate(-25 119.3 418.3)"/>
<path class="m" d="M112.4 405.7 L120.7 408.9 L133.5 408.3 L135.8 411.0 L135.8 428.2"/>
<path class="m" d="M110.8 412.1 L111.5 418.0 L114.0 423.0 L122.0 428.2 L135.8 428.2"/>
<path class="m" d="M123.2 446.8 L142.4 464.0 L145.0 464.8 L147.2 464.0 L173.0 450.0 L180.1 443.8 L182.4 437.1 L186.5 435.4 L191.5 436.5 L193.5 435.5 L215.5 425.5 L222.6 419.3 L224.9 412.6 L229.0 410.9 L234.0 412.0 L236.0 411.0 L258.0 401.0 L265.7 392.6 L266.8 387.0 L276.8 387.0 L281.3 384.7 L304.8 372.4 L286.9 364.6 L282.4 365.7 L272.4 370.2 L265.7 373.6 L264.5 376.9 L250.0 380.3"/>
<path class="mk" d="M69.8 425.5 L69.3 435.0 L71.0 439.5 L73.6 441.8 L81.3 440.8 L102.4 450.0 L120.0 462.0 L140.0 473.1 L143.5 474.0 L146.4 473.5 L315.4 376.9 L314.9 371.9 L294.7 353.4 L290.3 346.7"/>
<path class="m2" d="M81.0 441.0 L120.0 449.2 L140.8 466.7 L143.5 467.8 L146.4 467.5 L313.8 372.4"/>
<path class="m2" d="M290.3 350.0 L308.2 366.8 L311.0 370.0"/>
<path class="m" d="M143.2 445.2 L150.0 441.0 L156.7 439.6 L174.3 448.4"/>
<path class="m2" d="M156.7 436.0 L175.0 446.0"/>
<path class="m" d="M163.1 431.6 L180.0 441.2"/>
<path class="m2" d="M250.0 384.7 L264.5 393.7"/>
<ellipse class="m" cx="81.7" cy="423.6" rx="6" ry="4.3"/>
<ellipse class="m2" cx="81.7" cy="423.5" rx="3.6" ry="2.4"/>
<path class="m" d="M69.8 425.5 L75.7 422.6"/>
<path class="m" d="M87.7 424.0 L89.4 427.4"/>
<path class="m" d="M73.6 441.8 L81.3 440.8 L89.0 439.0 L96.6 443.2 L106.2 442.3 L117.7 435.0"/>
<path class="m" d="M89.4 409.2 L89.4 439.0"/>
<path class="m2" d="M96.6 431.0 L96.6 443.2"/>
<path class="m2" d="M89.4 409.2 L102.4 419.7"/>
<path class="m2" d="M89.4 427.4 L102.4 419.7"/>
<path class="m2" d="M88.0 427.0 L83.2 434.0 L78.4 428.4"/>
<path class="m" d="M87.0 404.4 L89.0 401.0 L93.7 400.0 L100.4 401.5 L107.0 404.4"/>
<path class="m2" d="M86.5 407.3 L91.8 405.3 L100.0 405.0 L116.0 408.0"/>
<path class="m" d="M91.8 406.8 L117.7 425.5 L121.6 430.0"/>
<path class="m2" d="M92.8 412.0 L106.2 418.8"/>
<ellipse class="mk" cx="116.3" cy="440.3" rx="3.4" ry="2.6"/>
<ellipse class="m2" cx="116.3" cy="440.3" rx="1.6" ry="1"/>
<path d="M20.9 434.6 V445 L109.2 394.5" fill="none" stroke="#666" stroke-width="0.6" stroke-dasharray="16 2"/>
<path d="M108.4 394.6 V447" stroke="#d4d4d4" stroke-width="1.6" fill="none"/>
<path class="m" d="M244.5 330.2 L244.5 313.4 L246.7 310.6 L250.1 309.5 L254.0 310.1 L259.6 311.7 L272.4 320.7 L275.8 319.6 L281.4 321.3 L284.2 326.8 L284.7 332.4 L288.1 336.4 L291.5 334.7"/>
<path class="m" d="M251.0 334.0 L249.0 315.7 L251.2 312.9 L254.0 313.0"/>
<path class="m" d="M249.0 315.7 L251.2 325.7 L261.3 333.6"/>
<path class="m" d="M258.8 312.4 L285.9 337.0 L285.9 347.5"/>
<path class="m2" d="M257.9 316.5 L282.0 338.0 L283.0 347.0"/>
<path class="m" d="M263.5 349.0 L263.5 329.0 L266.8 325.2 L270.5 326.0 L274.7 333.6 L274.7 344.7"/>
<ellipse class="m" cx="269.6" cy="331.9" rx="3.3" ry="4.5" transform="rotate(-15 269.6 331.9)"/>
<path class="m" d="M263.5 337.0 L284.7 348.1"/>
<path class="m2" d="M262.5 341.0 L280.0 350.0"/>
<ellipse cx="295.4" cy="338" rx="4.4" ry="3.3" fill="#bbb" stroke="#222" stroke-width="1.2"/><ellipse cx="295.6" cy="338.4" rx="2.4" ry="1.6" fill="#777"/>
<path class="m" d="M300.4 339.1 L300.4 347.0 L295.9 351.5 L291.0 351.0"/>
<path class="m2" d="M289.2 351.5 L310.0 367.1"/></svg>
</body></html>
